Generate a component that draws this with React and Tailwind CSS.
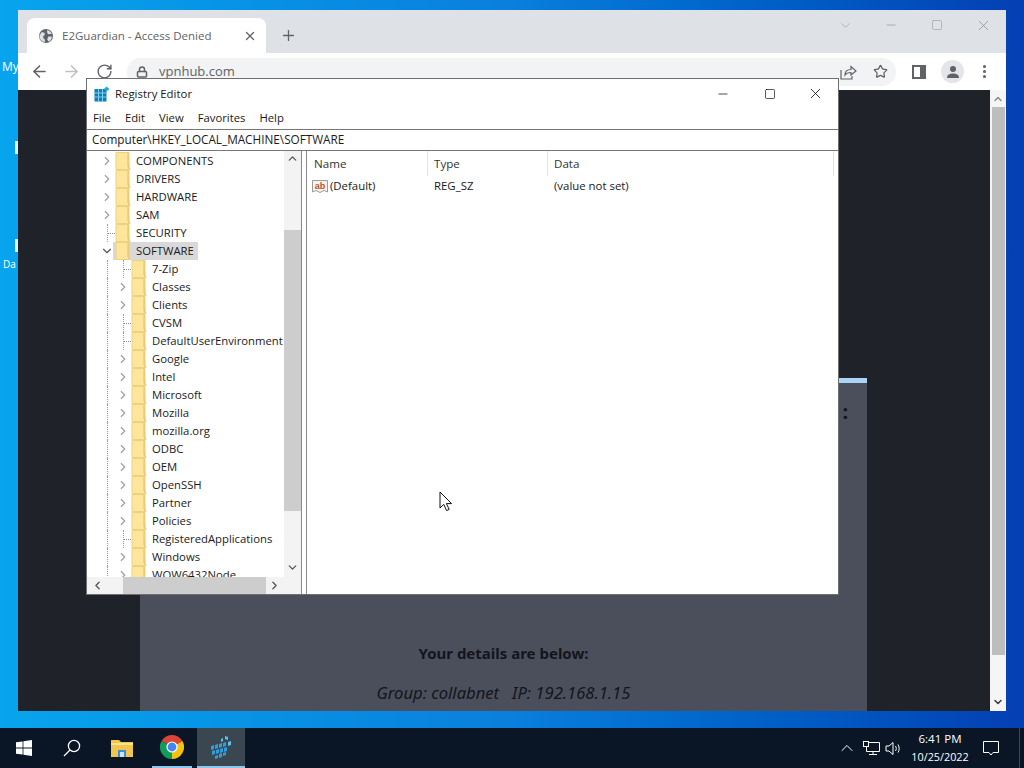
import { Lock, ArrowLeft, ArrowRight, RotateCw, Plus, X, Minus, Square, Star, MoreVertical, ChevronDown, ChevronRight, ChevronUp, ChevronLeft } from "lucide-react";

const roots = [
  { name: "COMPONENTS", arrow: true },
  { name: "DRIVERS", arrow: true },
  { name: "HARDWARE", arrow: true },
  { name: "SAM", arrow: true },
  { name: "SECURITY" },
  { name: "SOFTWARE", open: true, selected: true },
];

const children = [
  { name: "7-Zip" },
  { name: "Classes", arrow: true },
  { name: "Clients", arrow: true },
  { name: "CVSM" },
  { name: "DefaultUserEnvironment" },
  { name: "Google", arrow: true },
  { name: "Intel", arrow: true },
  { name: "Microsoft", arrow: true },
  { name: "Mozilla", arrow: true },
  { name: "mozilla.org", arrow: true },
  { name: "ODBC", arrow: true },
  { name: "OEM", arrow: true },
  { name: "OpenSSH", arrow: true },
  { name: "Partner", arrow: true },
  { name: "Policies", arrow: true },
  { name: "RegisteredApplications" },
  { name: "Windows", arrow: true },
  { name: "WOW6432Node", arrow: true },
];

const FolderIcon = () => (
  <svg width="16" height="18" viewBox="0 0 16 18" className="shrink-0">
    <path d="M1 0.5H14V16L15 17.5H1Z" fill="#fde59c" stroke="#efd27e" strokeWidth="1" />
    <path d="M13 0.5V15L15 17.5" fill="#f7d77e" stroke="#e0bf68" strokeWidth="1" />
  </svg>
);

const TreeRow = ({ item, level }) => (
  <div className="flex h-[18px] items-center">
    {level === 1 && <div className="h-full w-4 shrink-0 translate-x-[8px] border-l border-dotted border-[#9a9a9a]" />}
    <div className="relative flex h-full w-4 shrink-0 items-center justify-center">
      {item.open ? (
        <ChevronDown size={14} strokeWidth={2} className="text-[#555555]" />
      ) : item.arrow ? (
        <ChevronRight size={14} strokeWidth={2} className="text-[#a0a0a0]" />
      ) : (
        <div className="ml-2 flex h-full w-2 items-center border-l border-dotted border-[#9a9a9a]">
          <div className="w-full border-t border-dotted border-[#8a8a8a]" />
        </div>
      )}
    </div>
    <div className={`flex h-full items-center ${item.selected ? "-ml-[2px] bg-[#d9d9d9] pl-[2px]" : ""}`}>
      <FolderIcon />
      <span className="whitespace-nowrap pl-[5px] pr-[4px] text-[11.3px] leading-[18px] text-[#1a1a1a]">{item.name}</span>
    </div>
  </div>
);

const RegeditIcon = () => (
  <svg width="16" height="16" viewBox="0 0 16 16">
    <rect x="0.5" y="3" width="12" height="12.5" fill="#0f7fb8" />
    <path d="M4.5 3V15.5M8.5 3V15.5M0.5 7H12.5M0.5 11H12.5" stroke="#7fd0ee" strokeWidth="1" />
    <path d="M12.5 0.5L15.5 3L12.5 5.5L10 3Z" fill="#2ba6d8" />
  </svg>
);

// taskbar version: loose blue cubes, skewed
const RegeditCubes = () => (
  <svg width="22" height="24" viewBox="0 0 22 24" fill="#2f9fdc">
    <path d="M1 10L4 9V13L1 14Z M5 9L8 8V12L5 13Z M9 8L12 7V11L9 12Z M13 7L16 6V10L13 11Z" />
    <path d="M2 15L5 14V18L2 19Z M6 14L9 13V17L6 18Z M10 13L13 12V16L10 17Z M14 12L17 11V15L14 16Z" />
    <path d="M5 20L8 19V22L5 23Z M9 18L12 17V21L9 22Z M13 17L16 16V19L13 20Z" />
    <path d="M11 3L13 2V5L11 6Z M15 0L18 1V4L15 3Z M18 6L21 5V9L18 10Z" fill="#5cc3ee" />
  </svg>
);

const ChromeLogo = () => (
  <svg width="24" height="24" viewBox="0 0 24 24">
    <path d="M12 12L1.6 6A12 12 0 0 1 22.4 6Z" fill="#db4437" />
    <path d="M12 12L22.4 6A12 12 0 0 1 12 24Z" fill="#f4c20d" />
    <path d="M12 12L12 24A12 12 0 0 1 1.6 6Z" fill="#0f9d58" />
    <circle cx="12" cy="12" r="5.6" fill="#ffffff" />
    <circle cx="12" cy="12" r="4.4" fill="#4285f4" />
  </svg>
);

const Cursor = () => (
  <svg width="14" height="21" viewBox="0 0 14 21">
    <path d="M1 1V17L4.8 13.4L7.6 19.6L10.2 18.4L7.4 12.6H12.6Z" fill="#ffffff" stroke="#111111" strokeWidth="1" />
  </svg>
);

const ChromeWindow = () => (
  <div className="absolute left-[18px] top-[10px] flex h-[701px] w-[988px] flex-col">
    {/* tab strip */}
    <div className="flex h-[43px] shrink-0 items-end bg-[#dee1e6] pl-[9px]">
      <div className="flex h-[35px] w-[239px] items-center rounded-t-lg bg-white pl-[12px] pr-[9px]">
        <svg width="14" height="14" viewBox="0 0 24 24" className="shrink-0">
          <circle cx="12" cy="12" r="12" fill="#5f6368" />
          <path d="M4 6C8 5 10 7 10 9C10 11 7 11 7 14C7 16 10 16 10 19L10 23C4 21 0 16 1 11Z M14 2C17 2 20 4 22 8L17 9C15 9 13 6 14 2Z M16 13L22 13C22 17 20 20 17 22L14 18Z" fill="#dee1e6" />
        </svg>
        <span className="ml-[9px] flex-1 whitespace-nowrap text-[11.5px] text-[#5f6368]">E2Guardian - Access Denied</span>
        <X size={14} strokeWidth={2.2} className="text-[#5f6368]" />
      </div>
      <div className="flex h-[35px] w-[44px] items-center justify-center">
        <Plus size={17} strokeWidth={1.8} className="text-[#5f6368]" />
      </div>
      <div className="flex-1" />
      <div className="flex h-full items-start">
        <div className="flex h-[30px] w-[46px] items-center justify-center">
          <ChevronDown size={15} strokeWidth={1} className="text-[#9a9a9a]" />
        </div>
        <div className="flex h-[30px] w-[46px] items-center justify-center">
          <Minus size={14} strokeWidth={1} className="text-[#8a8a8a]" />
        </div>
        <div className="flex h-[30px] w-[46px] items-center justify-center">
          <Square size={12} strokeWidth={1} className="text-[#8a8a8a]" />
        </div>
        <div className="flex h-[30px] w-[46px] items-center justify-center">
          <X size={17} strokeWidth={1} className="text-[#8a8a8a]" />
        </div>
      </div>
    </div>
    {/* toolbar */}
    <div className="flex h-[37px] shrink-0 items-center bg-white pl-[12px] pr-[10px]">
      <ArrowLeft size={19} strokeWidth={2} className="text-[#5f6368]" />
      <ArrowRight size={19} strokeWidth={2} className="ml-[13px] text-[#bdc1c6]" />
      <RotateCw size={17} strokeWidth={2} className="ml-[15px] text-[#5f6368]" />
      <div className="ml-[14px] flex h-[28px] w-[769px] items-center rounded-full bg-[#f1f3f4] pl-[9px] pr-[8px]">
        <Lock size={12} strokeWidth={3} className="text-[#5f6368]" />
        <span className="ml-[11px] text-[13px] text-[#5f6368]">vpnhub.com</span>
        <div className="flex-1" />
        <svg width="17" height="16" viewBox="0 0 17 16" fill="none" stroke="#5f6368" strokeWidth="1.2">
          <path d="M1 6V15H12V12" />
          <path d="M5 11C5 7 8 5.5 11 5.5V2.5L16 7L11 11V8.5C8.5 8.5 6 9.5 5 11Z" />
        </svg>
        <Star size={15} strokeWidth={2} className="ml-[16px] text-[#5f6368]" />
      </div>
      <div className="ml-[16px] h-[14px] w-[14px] border-[2px] border-r-[6px] border-[#5f6368] bg-white" />
      <div className="ml-[15px] flex h-[23px] w-[23px] items-center justify-center rounded-full bg-[#e3e5e9]">
        <svg width="14" height="14" viewBox="0 0 14 14">
          <circle cx="7" cy="4" r="3" fill="#5f6368" />
          <path d="M1 13C1 9.5 4 8.5 7 8.5C10 8.5 13 9.5 13 13Z" fill="#5f6368" />
        </svg>
      </div>
      <MoreVertical size={17} strokeWidth={2.4} className="ml-[12px] text-[#5f6368]" />
    </div>
    {/* page */}
    <div className="flex min-h-0 flex-1 bg-[#1f2229]">
      <div className="flex-1 pl-[122px]">
        <div className="mt-[288px] flex h-[333px] w-[727px] flex-col items-center border-t-[5px] border-[#a9d4f3] bg-[#4b4f5c] text-[#13151c]" style={{ fontFamily: '"Noto Sans", sans-serif' }}>
          <div className="mt-[14px] w-full pr-[19px] text-right text-[20px] font-bold">:</div>
          <div className="mt-[216px] text-[15px] font-bold leading-5">Your details are below:</div>
          <div className="mt-[20px] whitespace-pre text-[16.6px] italic leading-5">Group: collabnet   IP: 192.168.1.15</div>
        </div>
      </div>
      <div className="flex w-[16px] shrink-0 flex-col items-center bg-[#f5f5f5]">
        <ChevronUp size={12} strokeWidth={3} className="mt-[3px] text-[#8c8c8c]" />
        <div className="mt-[2px] h-[548px] w-[13px] bg-[#bdbdbd]" />
        <div className="flex-1" />
        <ChevronDown size={12} strokeWidth={3} className="mb-[3px] text-[#3a3a3a]" />
      </div>
    </div>
  </div>
);

const RegistryWindow = () => (
  <div className="absolute left-[86px] top-[78px] flex h-[517px] w-[753px] flex-col border border-[#6f6f6f] bg-white" style={{ fontFamily: '"Open Sans", sans-serif' }}>
    <div className="flex h-[29px] shrink-0 items-center pl-[7px]">
      <RegeditIcon />
      <span className="ml-[5px] text-[11.4px] text-[#1a1a1a]">Registry Editor</span>
      <div className="flex-1" />
      <div className="flex h-full w-[46px] items-center justify-center"><Minus size={14} strokeWidth={1.2} className="text-black" /></div>
      <div className="flex h-full w-[46px] translate-x-[1px] items-center justify-center"><Square size={12} strokeWidth={1.3} className="text-black" /></div>
      <div className="flex h-full w-[46px] items-center justify-center"><X size={17} strokeWidth={1.1} className="text-black" /></div>
    </div>
    <div className="flex h-[21px] shrink-0 items-center gap-[14px] pl-[6px] text-[11.3px] text-[#1a1a1a]">
      <span>File</span>
      <span>Edit</span>
      <span>View</span>
      <span>Favorites</span>
      <span>Help</span>
    </div>
    <div className="flex h-[22px] shrink-0 items-center border-y border-y-[#777777] pl-[5px] text-[11.75px] text-[#1a1a1a]">
      Computer\HKEY_LOCAL_MACHINE\SOFTWARE
    </div>
    <div className="flex min-h-0 flex-1">
      {/* tree pane */}
      <div className="relative flex h-full w-[215px] shrink-0 flex-col border-r border-[#8a8a8a]">
        <div className="flex min-h-0 flex-1">
          <div className="min-w-0 flex-1 overflow-hidden pl-[12px] pt-[1px]">
            {roots.map((r) => <TreeRow key={r.name} item={r} level={0} />)}
            {children.map((c) => <TreeRow key={c.name} item={c} level={1} />)}
          </div>
          <div className="flex w-[17px] shrink-0 flex-col items-center bg-[#f3f3f3]">
            <ChevronUp size={13} strokeWidth={2.4} className="mt-[1px] text-[#555555]" />
            <div className="mt-[65px] h-[281px] w-full bg-[#cdcdcd]" />
            <div className="flex-1" />
            <ChevronDown size={13} strokeWidth={2.4} className="mb-[3px] text-[#555555]" />
          </div>
        </div>
        <div className="flex h-[17px] shrink-0 items-center bg-[#f3f3f3]">
          <ChevronLeft size={13} strokeWidth={2.4} className="ml-[4px] text-[#555555]" />
          <div className="ml-[19px] h-full w-[143px] bg-[#cdcdcd]" />
          <ChevronRight size={13} strokeWidth={2.4} className="ml-[2px] text-[#555555]" />
        </div>
      </div>
      {/* list pane */}
      <div className="ml-[4px] min-w-0 flex-1 border-l border-[#8a8a8a]">
        <div className="flex h-[25px] items-center text-[11.6px] text-[#333333]">
          <div className="flex h-full w-[121px] items-center border-r border-[#e5e5e5] pl-[7px]">Name</div>
          <div className="flex h-full w-[120px] items-center border-r border-[#e5e5e5] pl-[6px]">Type</div>
          <div className="flex h-full w-[286px] items-center border-r border-[#e5e5e5] pl-[6px]">Data</div>
        </div>
        <div className="mt-[1px] flex h-[18px] items-center text-[11.4px] text-[#1a1a1a]">
          <div className="flex w-[121px] items-center pl-[5px]">
            <svg width="16" height="16" viewBox="0 0 16 16" className="shrink-0">
              <path d="M0.5 2.5H15.5V14L12 12.5L8 14.5L4 12.5L0.5 14Z" fill="#f7f3ee" stroke="#9a9a9a" strokeWidth="1" />
              <text x="8" y="10.5" textAnchor="middle" fontSize="9" fontWeight="700" fill="#b5532a" fontFamily="Liberation Sans, sans-serif">ab</text>
            </svg>
            <span className="ml-[2px]">(Default)</span>
          </div>
          <div className="w-[120px] pl-[6px]">REG_SZ</div>
          <div className="pl-[6px]">(value not set)</div>
        </div>
      </div>
    </div>
  </div>
);

const Taskbar = () => (
  <div className="flex h-10 shrink-0 items-center bg-[#0a1626] text-white">
    <div className="flex h-full w-12 items-center justify-center">
      <svg width="16" height="16" viewBox="0 0 16 16" fill="#ffffff">
        <path d="M0 2.3L6.6 1.4V7.6H0Z M7.4 1.3L16 0V7.6H7.4Z M0 8.4H6.6V14.6L0 13.7Z M7.4 8.4H16V16L7.4 14.7Z" />
      </svg>
    </div>
    <div className="flex h-full w-12 items-center justify-center">
      <svg width="18" height="18" viewBox="0 0 18 18" fill="none" stroke="#ffffff" strokeWidth="1.3">
        <circle cx="11" cy="7" r="5.6" />
        <path d="M7 11L1 17" />
      </svg>
    </div>
    <div className="flex h-full w-[52px] items-center justify-center">
      <svg width="22" height="18" viewBox="0 0 22 18">
        <path d="M0 1H8L10 3H22V18H0Z" fill="#f2c54e" />
        <rect x="0" y="4" width="22" height="2" fill="#fbe38f" />
        <path d="M7 11H15V18H7Z" fill="#3d8fd1" />
        <rect x="9" y="13" width="4" height="5" fill="#cfe3f3" />
      </svg>
    </div>
    <div className="flex h-full w-[48px] flex-col items-center justify-end">
      <div className="mb-[7px]"><ChromeLogo /></div>
      <div className="h-[2px] w-10 bg-[#8fc7ec]" />
    </div>
    <div className="ml-[1px] flex h-full w-12 flex-col items-center justify-end bg-[#3a4650]">
      <div className="mb-[6px]"><RegeditCubes /></div>
      <div className="h-[2px] w-full bg-[#8fc7ec]" />
    </div>
    <div className="flex-1" />
    <ChevronUp size={20} strokeWidth={1.2} className="mr-[6px] text-white" />
    <svg width="17" height="15" viewBox="0 0 17 15" fill="none" stroke="#ffffff" strokeWidth="1" className="mr-[5px]">
      <path d="M3.5 1.5H16.5V10.5H3.5Z M10 10.5V13.5M6 13.5H14" />
      <rect x="0.5" y="0.5" width="5" height="5" fill="#0a1626" />
    </svg>
    <svg width="17" height="15" viewBox="0 0 17 15" fill="none" stroke="#ffffff" strokeWidth="1" className="mr-[8px]">
      <path d="M1 5H4L8 1.5V13.5L4 10H1Z" />
      <path d="M10.5 5C11.5 6.5 11.5 8.5 10.5 10M13 3.5C14.5 5.5 14.5 9.5 13 11.5" />
    </svg>
    <div className="flex w-[60px] flex-col items-center leading-[18px]" style={{ fontFamily: '"Open Sans", sans-serif' }}>
      <span className="text-[11.5px]">6:41 PM</span>
      <span className="text-[10.8px]">10/25/2022</span>
    </div>
    <div className="flex h-full w-[42px] items-center justify-center">
      <svg width="16" height="15" viewBox="0 0 16 15" fill="none" stroke="#ffffff" strokeWidth="1">
        <path d="M0.5 0.5H15.5V11.5H10L8 14L6 11.5H0.5Z" />
      </svg>
    </div>
    <div className="ml-[7px] h-full w-[5px] border-l border-[#3a4650]" />
  </div>
);

export default function App() {
  return (
    <div className="flex h-[768px] w-[1024px] flex-col overflow-hidden bg-[#0a1626]" style={{ fontFamily: '"Open Sans", sans-serif' }}>
      <div className="relative flex-1 bg-gradient-to-r from-[#08a4ee] via-[#0a7fdc] to-[#053fb4]">
        {/* desktop icon labels peeking out behind the browser */}
        <span className="absolute left-[2px] top-[58px] text-[12px] text-white">My</span>
        <div className="absolute left-[15px] top-[141px] h-[13px] w-[3px] bg-[#e8f4fc]" />
        <div className="absolute left-[15px] top-[239px] h-[13px] w-[3px] bg-[#e8f4fc]" />
        <span className="absolute left-[3px] top-[257px] text-[10px] text-white">Da</span>
        <ChromeWindow />
        <RegistryWindow />
        <div className="absolute left-[439px] top-[491px]"><Cursor /></div>
      </div>
      <Taskbar />
    </div>
  );
}
